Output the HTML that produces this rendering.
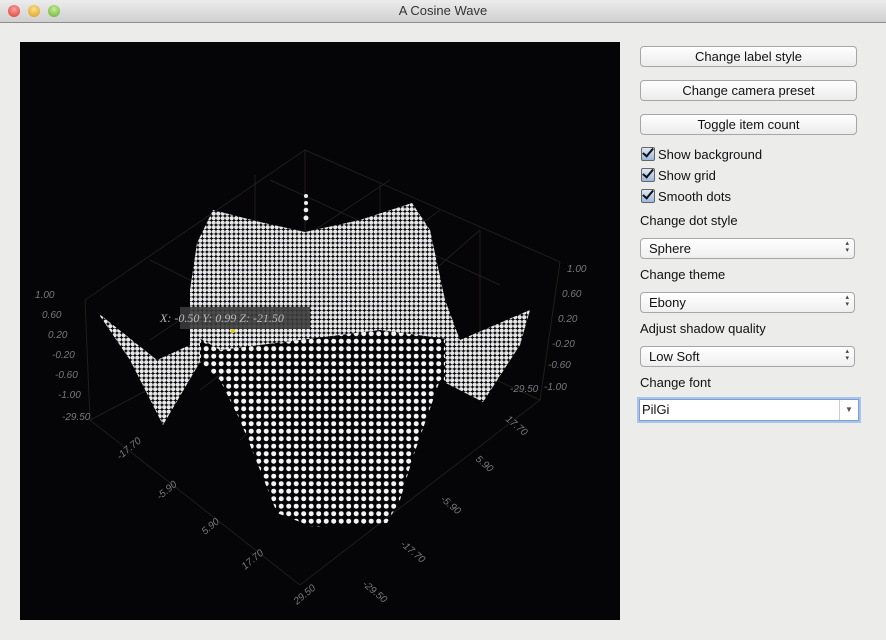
<!DOCTYPE html>
<html><head><style>
body{margin:0;width:886px;height:640px;background:#ececea;font-family:"Liberation Sans",sans-serif;font-size:13px;color:#111;position:relative;overflow:hidden}
.tb{position:absolute;left:0;top:0;width:886px;height:22px;background:linear-gradient(#ececec,#d0d0d0);border-bottom:1px solid #8e8e8e;text-align:center;line-height:22px;font-size:13px;color:#333}
.l{position:absolute;top:5px;width:12px;height:12px;border-radius:50%}
.btn{position:absolute;left:640px;width:215px;height:19px;border:1px solid #a6a6a6;border-radius:4px;background:linear-gradient(#fff,#ececec);text-align:center;line-height:19px;font-size:13px}
.cb{position:absolute;left:641px;font-size:13px}
.cb i{display:inline-block;width:12px;height:12px;border:1px solid #666;border-radius:2px;background:linear-gradient(#dfe9f7,#9db7dd);vertical-align:-2px;margin-right:3px;position:relative}
.cb i:after{content:"";position:absolute;left:3px;top:-2px;width:4px;height:9px;border:solid #111;border-width:0 2px 2px 0;transform:rotate(40deg)}
.lab{position:absolute;left:640px;font-size:13px}
.cmb{position:absolute;left:640px;width:205px;height:19px;border:1px solid #a6a6a6;border-radius:4px;background:linear-gradient(#fff,#efefef);line-height:19px;padding-left:8px;font-size:13px}
.cmb:after{content:"▴\A▾";white-space:pre;position:absolute;right:5px;top:1px;font-size:7px;line-height:7px;color:#444}
</style></head><body>
<div class="tb">A Cosine Wave
<div class="l" style="left:8px;background:radial-gradient(circle at 50% 35%,#f9a39c,#d9382f)"></div>
<div class="l" style="left:28px;background:radial-gradient(circle at 50% 35%,#fbe18a,#dc9a1a)"></div>
<div class="l" style="left:48px;background:radial-gradient(circle at 50% 35%,#c9ee9a,#5fae2c)"></div>
</div>
<svg style="position:absolute;left:20px;top:42px" width="600" height="578" viewBox="20 42 600 578">
<defs>
<pattern id="s" width="7.5" height="7.5" patternUnits="userSpaceOnUse"><circle cx="3.7" cy="3.7" r="2.5" fill="#f4f4f4"/></pattern>
<pattern id="d" width="4.5" height="4.5" patternUnits="userSpaceOnUse"><circle cx="2.2" cy="2.2" r="2.1" fill="#e8e8e8"/></pattern>
<clipPath id="c"><path d="M98 313 L157 360 L190 345 L190 290 L197 243 L213 210 L260 222 L305 232 L360 220 L412 203 L430 230 L445 300 L460 340 L530 310 L520 345 L483 402 L440 380 L413 457 L400 500 L387 523 L313 527 L277 513 L260 470 L240 420 L220 380 L200 362 L163 425 L130 360 Z"/></clipPath>
</defs>
<rect x="20" y="42" width="600" height="578" fill="#050407"/>
<g stroke="#201e18" stroke-width="1" fill="none">
<path d="M85 300 L305 150 L560 262 M85 300 L90 420 L300 585 M560 262 L540 400 L300 585 M305 150 L305 300 M90 420 L320 300 L540 400"/>
<path d="M150 260 L390 380 M220 215 L450 320 M270 180 L500 285 M150 340 L390 180 M200 390 L440 210 M240 440 L480 230 M255 175 L255 290 M380 185 L380 300 M480 230 L480 345"/>
</g>
<g clip-path="url(#c)">
<rect x="20" y="42" width="600" height="578" fill="url(#s)"/>
<path d="M185 200 L450 200 L455 340 L380 330 L300 340 L220 350 L185 330 Z" fill="#050407"/>
<path d="M185 200 L450 200 L455 340 L380 330 L300 340 L220 350 L185 330 Z" fill="url(#d)"/>
<path d="M98 300 L200 300 L200 430 L98 430 Z" fill="#050407"/>
<path d="M98 300 L200 300 L200 430 L98 430 Z" fill="url(#d)"/>
<path d="M445 300 L540 300 L540 410 L445 410 Z" fill="#050407"/>
<path d="M445 300 L540 300 L540 410 L445 410 Z" fill="url(#d)"/>
</g>
<g fill="#eee"><circle cx="306" cy="196" r="2"/><circle cx="306" cy="203" r="2"/><circle cx="306" cy="210" r="2.3"/><circle cx="306" cy="218" r="2.5"/></g>
<rect x="180" y="307" width="130" height="22" fill="#3a3a3a" opacity="0.9"/>
<text x="160" y="322" fill="#bbb" font-size="12" font-style="italic" font-family="Liberation Serif">X:  -0.50  Y:  0.99  Z:  -21.50</text>
<circle cx="233" cy="331" r="2" fill="#e8d000"/>
<g fill="#7a7a7a" font-size="10" font-style="italic">
<text x="35" y="298">1.00</text><text x="42" y="318">0.60</text><text x="48" y="338">0.20</text><text x="52" y="358">-0.20</text><text x="55" y="378">-0.60</text><text x="58" y="398">-1.00</text><text x="62" y="420">-29.50</text>
<text x="567" y="272">1.00</text><text x="562" y="297">0.60</text><text x="558" y="322">0.20</text><text x="552" y="347">-0.20</text><text x="548" y="368">-0.60</text><text x="544" y="390">-1.00</text><text x="510" y="392">-29.50</text>
<text x="120" y="460" transform="rotate(-40 120 460)">-17.70</text><text x="160" y="500" transform="rotate(-40 160 500)">-5.90</text>
<text x="205" y="535" transform="rotate(-40 205 535)">5.90</text><text x="245" y="570" transform="rotate(-40 245 570)">17.70</text>
<text x="297" y="605" transform="rotate(-40 297 605)">29.50</text>
<text x="505" y="420" transform="rotate(40 505 420)">17.70</text><text x="475" y="460" transform="rotate(40 475 460)">5.90</text>
<text x="440" y="500" transform="rotate(40 440 500)">-5.90</text><text x="400" y="545" transform="rotate(40 400 545)">-17.70</text>
<text x="362" y="585" transform="rotate(40 362 585)">-29.50</text>
</g>
</svg>
<div class="btn" style="top:46px">Change label style</div>
<div class="btn" style="top:80px">Change camera preset</div>
<div class="btn" style="top:114px">Toggle item count</div>
<div class="cb" style="top:147px"><i></i>Show background</div>
<div class="cb" style="top:168px"><i></i>Show grid</div>
<div class="cb" style="top:189px"><i></i>Smooth dots</div>
<div class="lab" style="top:213px">Change dot style</div>
<div class="cmb" style="top:238px">Sphere</div>
<div class="lab" style="top:267px">Change theme</div>
<div class="cmb" style="top:292px">Ebony</div>
<div class="lab" style="top:321px">Adjust shadow quality</div>
<div class="cmb" style="top:346px">Low Soft</div>
<div class="lab" style="top:375px">Change font</div>
<div style="position:absolute;left:639px;top:399px;width:216px;height:20px;border:1px solid #7aa0d8;box-shadow:0 0 0 2px #a9c3ea;background:#fff;line-height:20px;padding-left:2px;font-size:13px">PilGi<span style="position:absolute;right:0;top:0;width:18px;height:20px;border-left:1px solid #ccc;text-align:center;font-size:8px;color:#555">▼</span></div>
</body></html>
